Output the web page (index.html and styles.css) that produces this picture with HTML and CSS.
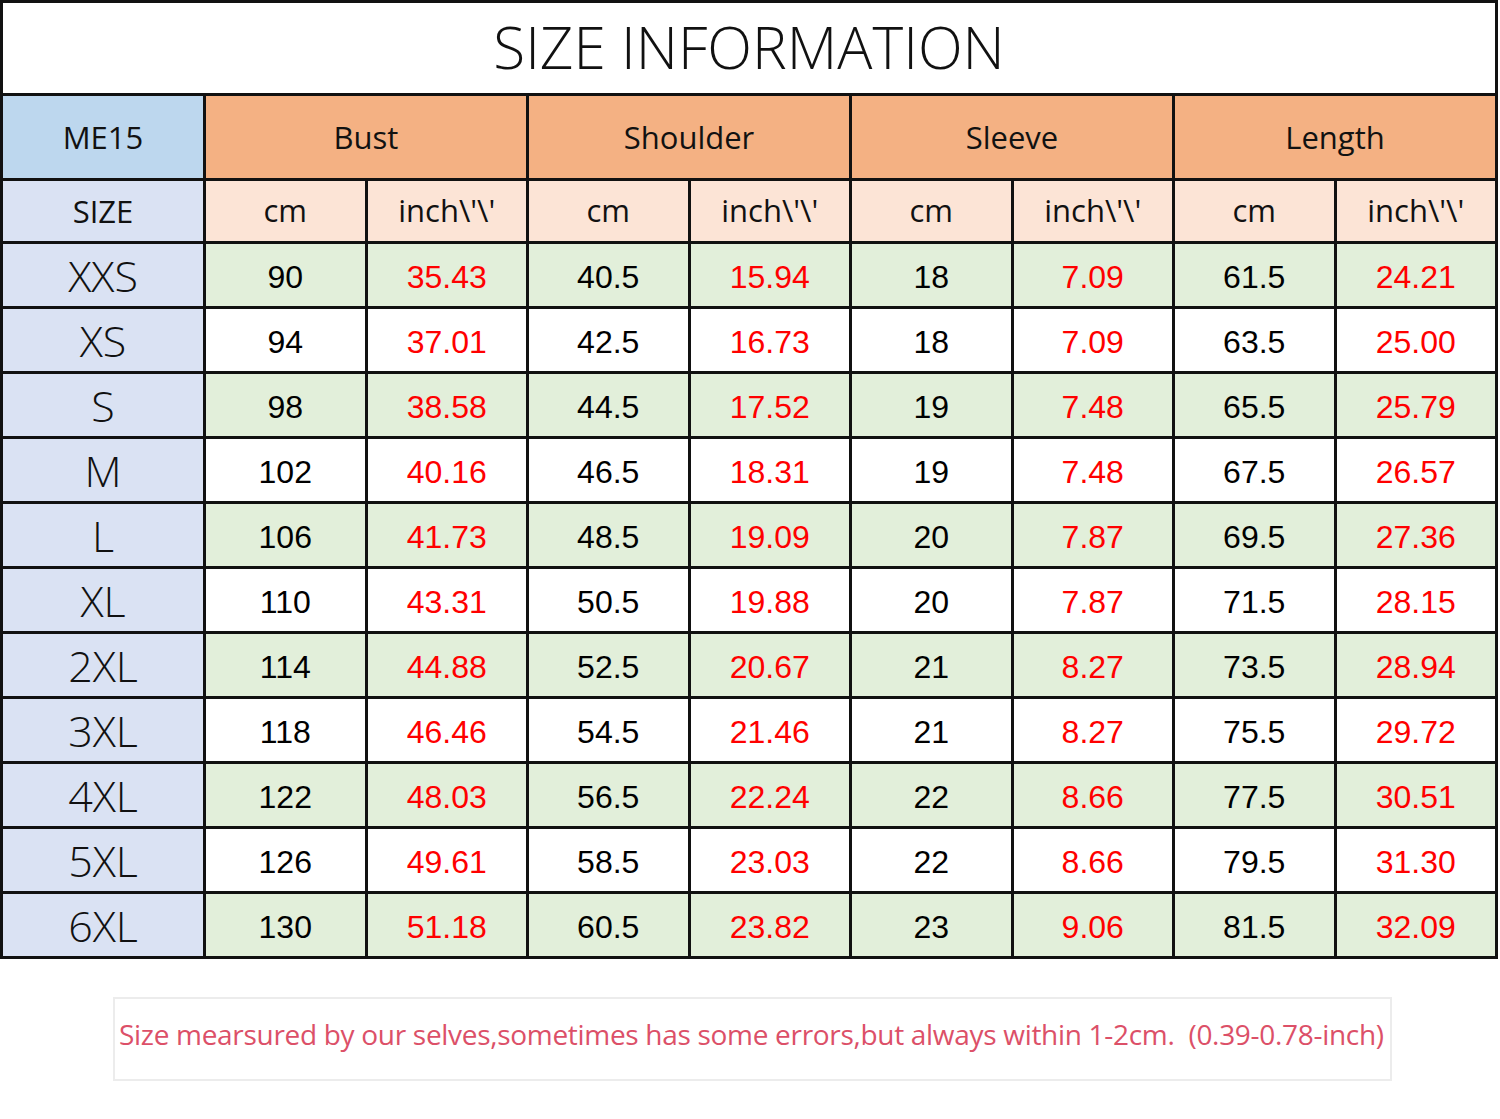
FILE: index.html
```html
<!DOCTYPE html>
<html>
<head>
<meta charset="utf-8">
<title>Size Information</title>
<link rel="stylesheet" href="styles.css">
</head>
<body>
<div class="chart">
  <div class="title">SIZE INFORMATION</div>

  <div class="model">ME15</div>
  <div class="group">Bust</div>
  <div class="group">Shoulder</div>
  <div class="group">Sleeve</div>
  <div class="group">Length</div>

  <div class="sizehead">SIZE</div>
  <div class="unit">cm</div><div class="unit">inch\'\'</div>
  <div class="unit">cm</div><div class="unit">inch\'\'</div>
  <div class="unit">cm</div><div class="unit">inch\'\'</div>
  <div class="unit">cm</div><div class="unit">inch\'\'</div>

  <div class="size">XXS</div>
  <div class="v g">90</div><div class="v g r">35.43</div><div class="v g">40.5</div><div class="v g r">15.94</div><div class="v g">18</div><div class="v g r">7.09</div><div class="v g">61.5</div><div class="v g r">24.21</div>

  <div class="size">XS</div>
  <div class="v">94</div><div class="v r">37.01</div><div class="v">42.5</div><div class="v r">16.73</div><div class="v">18</div><div class="v r">7.09</div><div class="v">63.5</div><div class="v r">25.00</div>

  <div class="size">S</div>
  <div class="v g">98</div><div class="v g r">38.58</div><div class="v g">44.5</div><div class="v g r">17.52</div><div class="v g">19</div><div class="v g r">7.48</div><div class="v g">65.5</div><div class="v g r">25.79</div>

  <div class="size">M</div>
  <div class="v">102</div><div class="v r">40.16</div><div class="v">46.5</div><div class="v r">18.31</div><div class="v">19</div><div class="v r">7.48</div><div class="v">67.5</div><div class="v r">26.57</div>

  <div class="size">L</div>
  <div class="v g">106</div><div class="v g r">41.73</div><div class="v g">48.5</div><div class="v g r">19.09</div><div class="v g">20</div><div class="v g r">7.87</div><div class="v g">69.5</div><div class="v g r">27.36</div>

  <div class="size">XL</div>
  <div class="v">110</div><div class="v r">43.31</div><div class="v">50.5</div><div class="v r">19.88</div><div class="v">20</div><div class="v r">7.87</div><div class="v">71.5</div><div class="v r">28.15</div>

  <div class="size">2XL</div>
  <div class="v g">114</div><div class="v g r">44.88</div><div class="v g">52.5</div><div class="v g r">20.67</div><div class="v g">21</div><div class="v g r">8.27</div><div class="v g">73.5</div><div class="v g r">28.94</div>

  <div class="size">3XL</div>
  <div class="v">118</div><div class="v r">46.46</div><div class="v">54.5</div><div class="v r">21.46</div><div class="v">21</div><div class="v r">8.27</div><div class="v">75.5</div><div class="v r">29.72</div>

  <div class="size">4XL</div>
  <div class="v g">122</div><div class="v g r">48.03</div><div class="v g">56.5</div><div class="v g r">22.24</div><div class="v g">22</div><div class="v g r">8.66</div><div class="v g">77.5</div><div class="v g r">30.51</div>

  <div class="size">5XL</div>
  <div class="v">126</div><div class="v r">49.61</div><div class="v">58.5</div><div class="v r">23.03</div><div class="v">22</div><div class="v r">8.66</div><div class="v">79.5</div><div class="v r">31.30</div>

  <div class="size">6XL</div>
  <div class="v g">130</div><div class="v g r">51.18</div><div class="v g">60.5</div><div class="v g r">23.82</div><div class="v g">23</div><div class="v g r">9.06</div><div class="v g">81.5</div><div class="v g r">32.09</div>
</div>

<div class="note">Size mearsured by our selves,sometimes has some errors,but always within 1-2cm.&nbsp; (0.39-0.78-inch)</div>
</body>
</html>
```

FILE: styles.css
```css
html, body {
  margin: 0;
  padding: 0;
  background: #ffffff;
}

.chart {
  display: grid;
  grid-template-columns: 200px repeat(8, 158.5px);
  grid-template-rows: 90px 82px 60px repeat(11, 62px);
  gap: 3px;
  padding: 3px;
  width: max-content;
  background: #111111;
}

.chart > div {
  display: flex;
  align-items: center;
  justify-content: center;
  white-space: nowrap;
}

.title {
  grid-column: 1 / -1;
  background: #ffffff;
  font-family: "Open Sans", sans-serif;
  font-weight: 300;
  font-size: 58.5px;
  color: #111;
  padding-bottom: 4px;
}

.model {
  background: #bdd7ee;
  font-family: "Open Sans", sans-serif;
  font-size: 31px;
  color: #111;
}

.group {
  grid-column: span 2;
  background: #f4b183;
  font-family: "Open Sans", sans-serif;
  font-size: 31px;
  color: #111;
}

.sizehead {
  background: #dae2f3;
  font-family: "Open Sans", sans-serif;
  font-size: 31px;
  color: #111;
}

.unit {
  background: #fce4d6;
  font-family: "Open Sans", sans-serif;
  font-size: 31px;
  color: #111;
  padding-bottom: 2px;
}

.size {
  background: #dae2f3;
  font-family: "Open Sans", sans-serif;
  font-weight: 300;
  font-size: 43px;
  color: #111;
}

.v {
  background: #ffffff;
  font-family: "Liberation Sans", Arial, sans-serif;
  font-size: 32px;
  color: #000;
  padding-top: 4px;
}

.v.g {
  background: #e2efda;
}

.v.r {
  color: #ff0000;
}

.note {
  margin: 38px 0 0 113px;
  width: 1279px;
  height: 84px;
  box-sizing: border-box;
  border: 2px solid #ececec;
  display: flex;
  align-items: center;
  padding: 0 0 10px 4px;
  font-family: "Open Sans", sans-serif;
  font-size: 28px;
  letter-spacing: -0.3px;
  color: #dc5068;
  white-space: nowrap;
}
```
